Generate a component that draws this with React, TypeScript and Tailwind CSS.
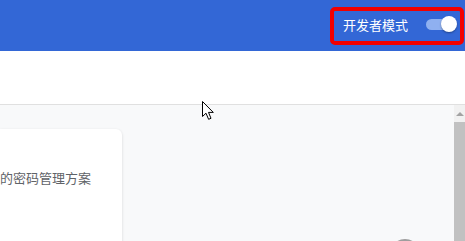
import React from "react";

const FONT = { fontFamily: '"Noto Sans CJK SC", "Noto Sans", sans-serif' };

function DevToggle() {
  return (
    <div className="flex items-center justify-between w-[134px] h-[38px] border-[4px] border-[#f20000] rounded-[5px] pl-[9px] pr-[3px] pb-[3px]">
      <span className="text-[13px] text-white leading-none">开发者模式</span>
      <div className="relative w-[31px] h-[17px] flex items-center">
        <div className="w-[28px] h-[11px] rounded-full bg-[#8fb0f0]" />
        <div className="absolute right-0 w-[16px] h-[16px] rounded-full bg-white shadow-[0_1px_2px_rgba(0,0,0,0.35)]" />
      </div>
    </div>
  );
}

function Cursor() {
  return (
    <svg className="absolute left-[202px] top-[101px]" width="13" height="20" viewBox="0 0 13 20">
      <path
        d="M0.5 0.5 L0.5 15.5 L4 12.2 L6.6 18.3 L9 17.3 L6.5 11.4 L11.3 11.4 Z"
        fill="#fff"
        stroke="#000"
        strokeWidth="1"
        strokeLinejoin="round"
      />
    </svg>
  );
}

export default function App() {
  return (
    <div className="relative w-[465px] h-[241px] overflow-hidden flex flex-col bg-white" style={FONT}>
      {/* top bar */}
      <header className="h-[51px] bg-[#3367d6] flex items-center justify-end pr-[1px] shrink-0">
        <DevToggle />
      </header>

      {/* toolbar band */}
      <div className="h-[54px] bg-white border-b border-[#e0e0e0] shrink-0" />

      {/* content */}
      <div className="relative flex-1 flex bg-[#f8f9fa]">
        <div className="flex-1 pt-[24px]">
          <div className="w-[122px] h-[200px] bg-white rounded-tr-[6px] shadow-[0_1px_3px_rgba(0,0,0,0.15)] overflow-hidden pt-[39px]">
            <p className="whitespace-nowrap text-[13px] leading-[20px] text-[#5f6368]">的密码管理方案</p>
          </div>
        </div>

        {/* scrollbar */}
        <div className="w-[11px] bg-[#f1f1f1] flex flex-col items-center shrink-0">
          <div className="h-[17px] flex items-center justify-center">
            <div className="w-0 h-0 border-l-[4px] border-r-[4px] border-b-[4px] border-l-transparent border-r-transparent border-b-[#a3a3a3]" />
          </div>
          <div className="w-full flex-1 bg-[#c1c1c1]" />
        </div>

        {/* floating button peeking from the bottom */}
        <div className="absolute left-[390px] top-[134px] w-[30px] h-[30px] rounded-full bg-[#9e9e9e]" />
      </div>

      <Cursor />
    </div>
  );
}
